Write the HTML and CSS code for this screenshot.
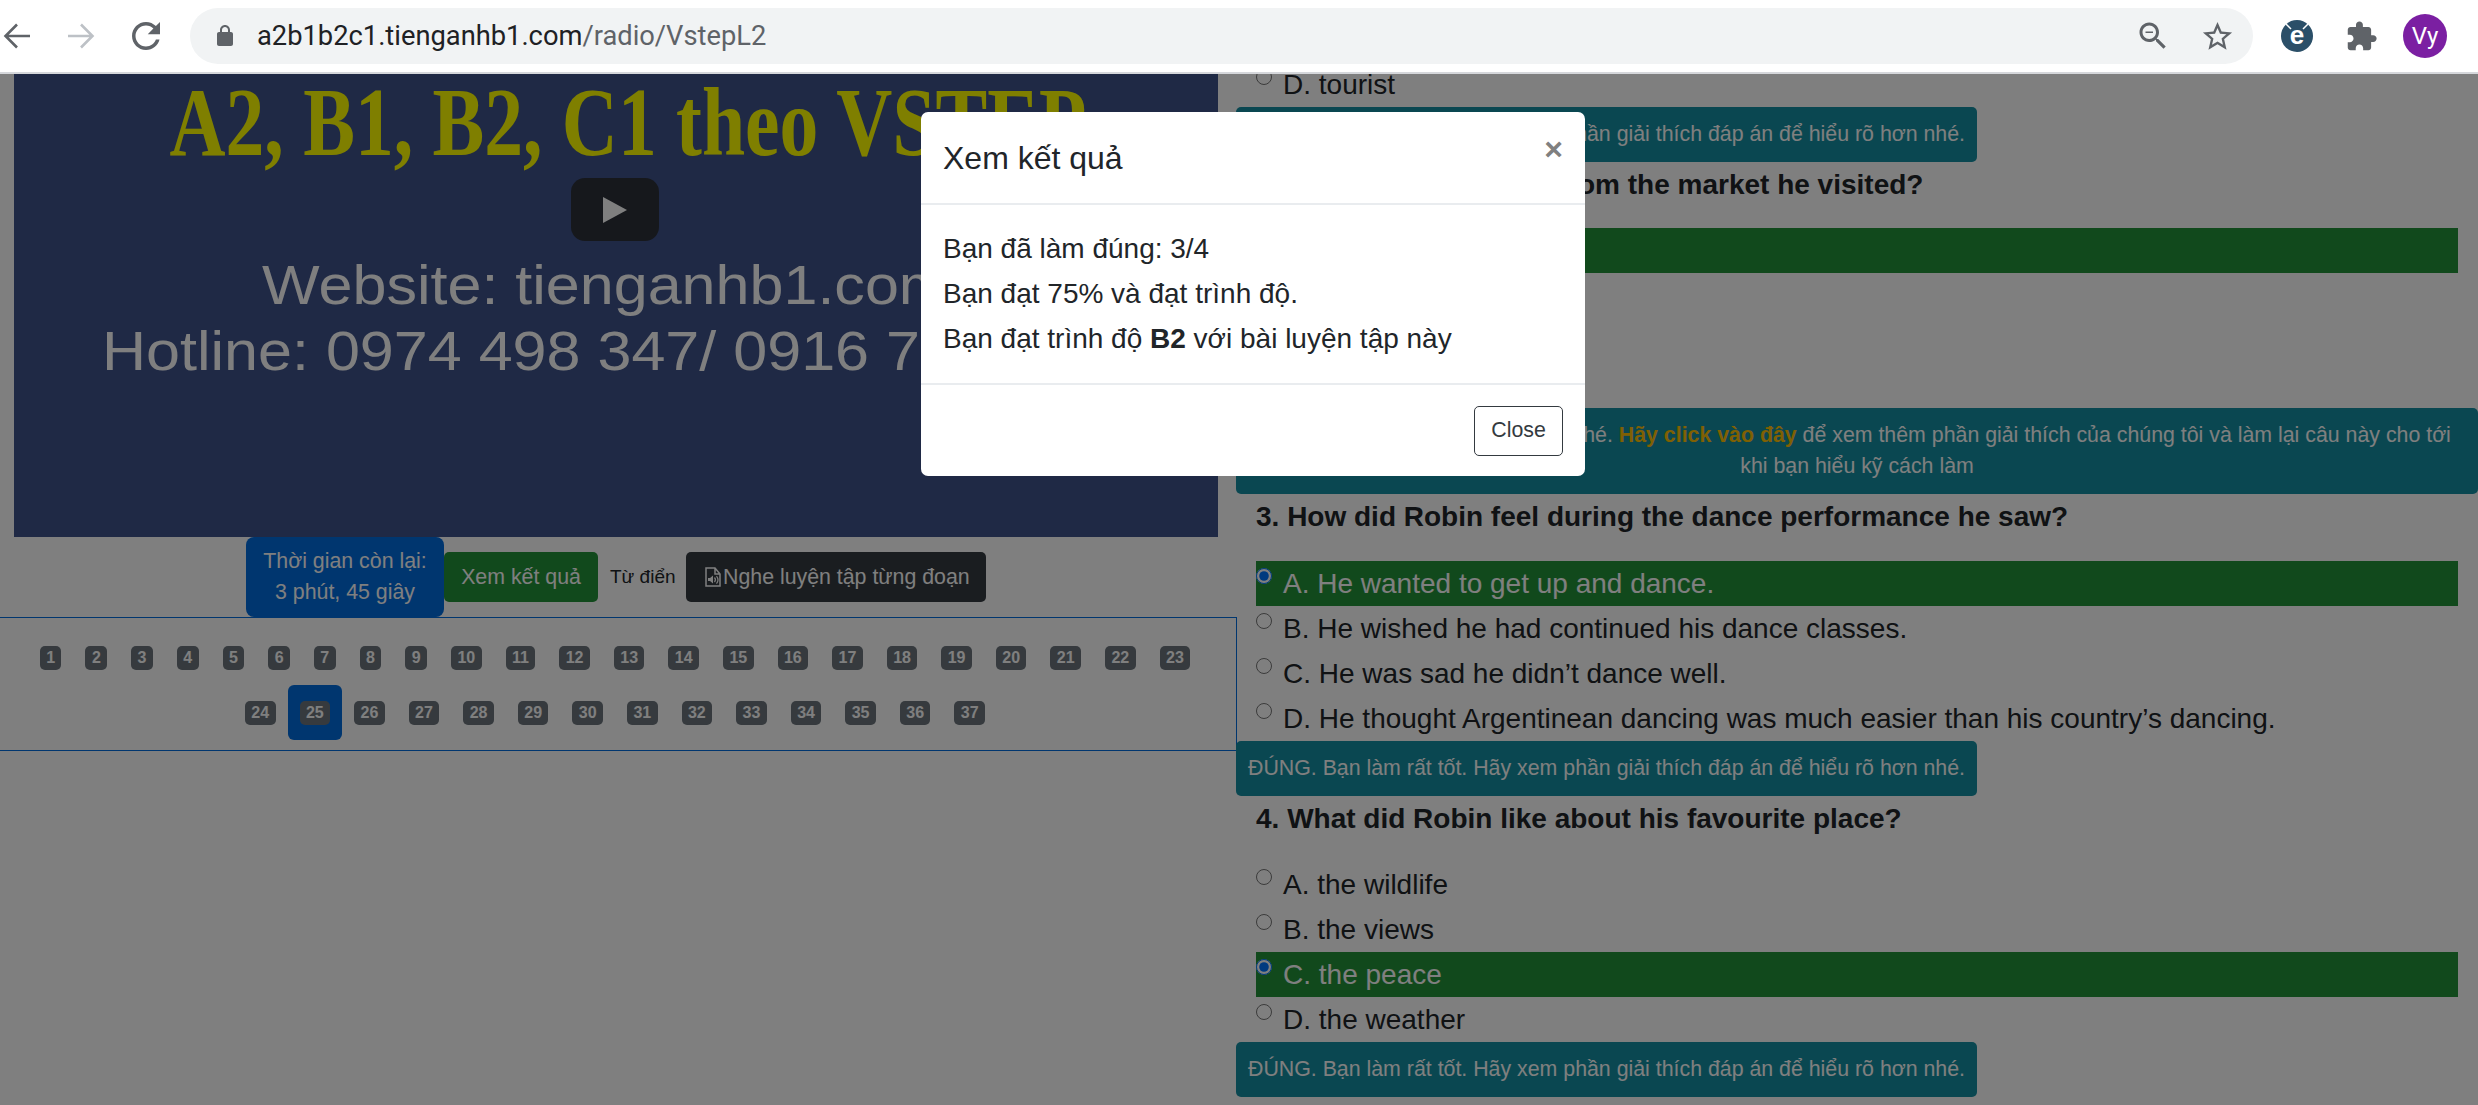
FILE: index.html
```html
<!DOCTYPE html>
<html lang="vi">
<head>
    <meta charset="UTF-8">
    <title>Luyện nghe VSTEP</title>
    <link rel="stylesheet" href="styles.css">
</head>
<body>
    <div class="toolbar">
        <svg class="tb-back" viewBox="0 0 30 30"><path d="M28 15H4M15 3.5L3.5 15 15 26.5"/></svg>
        <svg class="tb-forward" viewBox="0 0 30 30"><path d="M2 15h24M15 3.5L26.5 15 15 26.5"/></svg>
        <svg class="tb-reload" viewBox="0 0 24 24"><path d="M17.65 6.35C16.2 4.9 14.21 4 12 4c-4.42 0-7.99 3.58-7.99 8s3.57 8 7.99 8c3.73 0 6.84-2.55 7.73-6h-2.08c-.82 2.33-3.04 4-5.65 4-3.31 0-6-2.69-6-6s2.69-6 6-6c1.66 0 3.14.69 4.22 1.78L13 11h7V4l-2.35 2.35z"/></svg>
        <div class="omnibox">
            <svg class="tb-lock" viewBox="0 0 24 24"><path d="M18 8h-1V6c0-2.76-2.24-5-5-5S7 3.24 7 6v2H6c-1.1 0-2 .9-2 2v10c0 1.1.9 2 2 2h12c1.1 0 2-.9 2-2V10c0-1.1-.9-2-2-2zM9 6c0-1.66 1.34-3 3-3s3 1.34 3 3v2H9V6z"/></svg>
            <div class="url">a2b1b2c1.tienganhb1.com<span class="url-path">/radio/VstepL2</span></div>
            <svg class="tb-zoom" viewBox="0 0 24 24"><path d="M15.5 14h-.79l-.28-.27C15.41 12.59 16 11.11 16 9.5 16 5.91 13.09 3 9.5 3S3 5.91 3 9.5 5.91 16 9.5 16c1.61 0 3.09-.59 4.23-1.57l.27.28v.79l5 4.99L20.49 19l-4.99-5zm-6 0C7.01 14 5 11.99 5 9.5S7.01 5 9.5 5 14 7.01 14 9.5 11.99 14 9.5 14zM7 9h5v1H7z"/></svg>
            <svg class="tb-star" viewBox="0 0 24 24"><path d="M22 9.24l-7.19-.62L12 2 9.19 8.63 2 9.24l5.46 4.73L5.82 21 12 17.27 18.18 21l-1.63-7.03L22 9.24zM12 15.4l-3.76 2.27 1-4.28-3.32-2.88 4.38-.38L12 6.1l1.71 4.04 4.38.38-3.32 2.88 1 4.28L12 15.4z"/></svg>
        </div>
        <svg class="tb-ext" viewBox="0 0 32 32">
            <circle cx="16" cy="16" r="16" fill="#2b4f68"/>
            <path d="M5 4l5 5M27 4l-5 5" stroke="#fff" stroke-width="1.5"/>
            <text x="16" y="24" text-anchor="middle" class="ext-letter">e</text>
        </svg>
        <svg class="tb-puzzle" viewBox="0 0 24 24"><path d="M20.5 11H19V7c0-1.1-.9-2-2-2h-4V3.5C13 2.12 11.88 1 10.5 1S8 2.12 8 3.5V5H4c-1.1 0-1.99.9-1.99 2v3.8H3.5c1.49 0 2.7 1.21 2.7 2.7s-1.21 2.7-2.7 2.7H2V20c0 1.1.9 2 2 2h3.8v-1.5c0-1.49 1.21-2.7 2.7-2.7 1.49 0 2.7 1.21 2.7 2.7V22H17c1.1 0 2-.9 2-2v-4h1.5c1.38 0 2.5-1.12 2.5-2.5S21.88 11 20.5 11z"/></svg>
        <div class="avatar">Vy</div>
    </div>

    <div class="viewport">
        <div class="page">
            <div class="left-col">
                <div class="video">
                    <div class="video-title">A2, B1, B2, C1 theo VSTEP</div>
                    <div class="video-line video-site">Website: tienganhb1.com</div>
                    <div class="video-line video-hotline">Hotline: 0974 498 347/ 0916 7</div>
                    <div class="play-button"><span class="play-arrow"></span></div>
                </div>
                <div class="actions">
                    <div class="timer">Thời gian còn lại:<br>3 phút, 45 giây</div>
                    <a class="btn btn-green">Xem kết quả</a>
                    <span class="dict">Từ điển</span>
                    <a class="btn btn-dark">
                        <svg class="file-icon" viewBox="0 0 20 20">
                            <path d="M3 1h9l5 6v12H3zM12 1v6h5" fill="none" stroke="currentColor" stroke-width="1.5"/>
                            <path d="M5 11h2l3-2.5v8L7 14H5z" fill="currentColor"/>
                            <path d="M11.5 10.5a3.5 3.5 0 0 1 0 4.5M13.5 9a6 6 0 0 1 0 7.5" fill="none" stroke="currentColor" stroke-width="1.2"/>
                        </svg>Nghe luyện tập từng đoạn
                    </a>
                </div>
                <div class="qnav">
                    <a class="qnav-item"><span class="badge">1</span></a>
                    <a class="qnav-item"><span class="badge">2</span></a>
                    <a class="qnav-item"><span class="badge">3</span></a>
                    <a class="qnav-item"><span class="badge">4</span></a>
                    <a class="qnav-item"><span class="badge">5</span></a>
                    <a class="qnav-item"><span class="badge">6</span></a>
                    <a class="qnav-item"><span class="badge">7</span></a>
                    <a class="qnav-item"><span class="badge">8</span></a>
                    <a class="qnav-item"><span class="badge">9</span></a>
                    <a class="qnav-item"><span class="badge">10</span></a>
                    <a class="qnav-item"><span class="badge">11</span></a>
                    <a class="qnav-item"><span class="badge">12</span></a>
                    <a class="qnav-item"><span class="badge">13</span></a>
                    <a class="qnav-item"><span class="badge">14</span></a>
                    <a class="qnav-item"><span class="badge">15</span></a>
                    <a class="qnav-item"><span class="badge">16</span></a>
                    <a class="qnav-item"><span class="badge">17</span></a>
                    <a class="qnav-item"><span class="badge">18</span></a>
                    <a class="qnav-item"><span class="badge">19</span></a>
                    <a class="qnav-item"><span class="badge">20</span></a>
                    <a class="qnav-item"><span class="badge">21</span></a>
                    <a class="qnav-item"><span class="badge">22</span></a>
                    <a class="qnav-item"><span class="badge">23</span></a>
                    <a class="qnav-item"><span class="badge">24</span></a>
                    <a class="qnav-item active"><span class="badge">25</span></a>
                    <a class="qnav-item"><span class="badge">26</span></a>
                    <a class="qnav-item"><span class="badge">27</span></a>
                    <a class="qnav-item"><span class="badge">28</span></a>
                    <a class="qnav-item"><span class="badge">29</span></a>
                    <a class="qnav-item"><span class="badge">30</span></a>
                    <a class="qnav-item"><span class="badge">31</span></a>
                    <a class="qnav-item"><span class="badge">32</span></a>
                    <a class="qnav-item"><span class="badge">33</span></a>
                    <a class="qnav-item"><span class="badge">34</span></a>
                    <a class="qnav-item"><span class="badge">35</span></a>
                    <a class="qnav-item"><span class="badge">36</span></a>
                    <a class="qnav-item"><span class="badge">37</span></a>
                </div>
            </div>

            <div class="right-col">
                <label class="option"><input type="radio" name="q1"><span>D. tourist</span></label>
                <div class="alert">ĐÚNG. Bạn làm rất tốt. Hãy xem phần giải thích đáp án để hiểu rõ hơn nhé.</div>

                <div class="question">2. What did Robin buy from the market he visited?</div>
                <label class="option correct"><input type="radio" name="q2" checked><span>A.</span></label>
                <label class="option"><input type="radio" name="q2"><span>B.</span></label>
                <label class="option"><input type="radio" name="q2"><span>C.</span></label>
                <label class="option"><input type="radio" name="q2"><span>D.</span></label>
                <div class="alert alert-wide">SAI. Bạn hãy xem lại kỹ đáp án, nhé. <a class="alert-link">Hãy click vào đây</a> để xem thêm phần giải thích của chúng tôi và làm lại câu này cho tới<br>khi bạn hiểu kỹ cách làm</div>

                <div class="question">3. How did Robin feel during the dance performance he saw?</div>
                <label class="option correct"><input type="radio" name="q3" checked><span>A. He wanted to get up and dance.</span></label>
                <label class="option"><input type="radio" name="q3"><span>B. He wished he had continued his dance classes.</span></label>
                <label class="option"><input type="radio" name="q3"><span>C. He was sad he didn’t dance well.</span></label>
                <label class="option"><input type="radio" name="q3"><span>D. He thought Argentinean dancing was much easier than his country’s dancing.</span></label>
                <div class="alert">ĐÚNG. Bạn làm rất tốt. Hãy xem phần giải thích đáp án để hiểu rõ hơn nhé.</div>

                <div class="question">4. What did Robin like about his favourite place?</div>
                <label class="option"><input type="radio" name="q4"><span>A. the wildlife</span></label>
                <label class="option"><input type="radio" name="q4"><span>B. the views</span></label>
                <label class="option correct"><input type="radio" name="q4" checked><span>C. the peace</span></label>
                <label class="option"><input type="radio" name="q4"><span>D. the weather</span></label>
                <div class="alert">ĐÚNG. Bạn làm rất tốt. Hãy xem phần giải thích đáp án để hiểu rõ hơn nhé.</div>
            </div>
        </div>

        <div class="backdrop">
            <div class="modal">
                <div class="modal-header">
                    <div class="modal-title">Xem kết quả</div>
                    <span class="modal-x">×</span>
                </div>
                <div class="modal-body">
                    <div>Bạn đã làm đúng: 3/4</div>
                    <div>Bạn đạt 75% và đạt trình độ.</div>
                    <div>Bạn đạt trình độ <b>B2</b> với bài luyện tập này</div>
                </div>
                <div class="modal-footer">
                    <a class="btn-close">Close</a>
                </div>
            </div>
        </div>
    </div>
</body>
</html>
```

FILE: styles.css
```css
* {
    margin: 0;
    padding: 0;
    box-sizing: border-box;
}

body {
    font-family: 'Liberation Sans', Arial, sans-serif;
    background: #fff;
    color: #212529;
    height: 100vh;
    overflow: hidden;
    display: flex;
    flex-direction: column;
}

/* browser bar */
.toolbar {
    flex: none;
    height: 74px;
    display: flex;
    align-items: center;
    background: #fff;
    border-bottom: 2px solid #d5d7db;
}

.toolbar svg {
    flex: none;
    fill: #5f6368;
}

.tb-back, .tb-forward {
    width: 30px;
    height: 30px;
    fill: none !important;
    stroke: #5f6368;
    stroke-width: 2.6;
}

.tb-back {
    margin-left: 2px;
}

.tb-forward {
    margin-left: 34px;
    stroke: #bdc1c6;
}

.tb-reload {
    width: 42px;
    height: 42px;
    margin-left: 29px;
}

.omnibox {
    flex: none;
    width: 2063px;
    height: 56px;
    margin-left: 23px;
    padding: 0 18px 0 23px;
    border-radius: 28px;
    background: #f1f3f4;
    display: flex;
    align-items: center;
}

.tb-lock {
    width: 24px;
    height: 24px;
}

.url {
    flex: 1;
    margin-left: 20px;
    font-family: 'Roboto', sans-serif;
    font-size: 27.3px;
    color: #202124;
}

.url-path {
    color: #5f6368;
}

.tb-zoom {
    width: 36px;
    height: 36px;
}

.tb-star {
    width: 35px;
    height: 35px;
    margin-left: 29px;
}

.tb-ext {
    width: 32px;
    height: 32px;
    margin-left: 28px;
}

.ext-letter {
    font-family: 'Liberation Sans', sans-serif;
    font-weight: bold;
    font-size: 26px;
    fill: #fff;
}

.tb-puzzle {
    width: 33px;
    height: 33px;
    margin-left: 32px;
}

.avatar {
    flex: none;
    width: 44px;
    height: 44px;
    margin-left: 25px;
    border-radius: 50%;
    background: #7b1fa2;
    color: #fff;
    font-family: 'Roboto', sans-serif;
    font-size: 24px;
    line-height: 44px;
    text-align: center;
}

/* page under the dialog */
.viewport {
    flex: 1;
    position: relative;
    overflow: hidden;
}

.page {
    display: grid;
    grid-template-columns: 1236px 1fr;
    align-items: start;
}

.left-col {
    min-width: 0;
}

.video {
    position: relative;
    height: 463px;
    margin: 0 18px 0 14px;
    background: #3e528a;
    overflow: hidden;
}

/* the thumbnail's texts are stretched sideways in the video frame */
.video-title {
    font-family: 'Liberation Serif', serif;
    font-weight: bold;
    font-size: 97px;
    line-height: 98px;
    color: #ffff00;
    text-align: center;
    white-space: nowrap;
    transform: translateX(12px) scaleX(0.8);
}

.video-line {
    font-size: 56px;
    line-height: 62px;
    color: #fff;
    white-space: nowrap;
}

.video-site {
    margin-top: 82px;
    transform: translateX(248px) scaleX(1.09);
    transform-origin: left;
}

.video-hotline {
    margin-top: 4px;
    transform: translateX(88px) scaleX(1.09);
    transform-origin: left;
}

.play-button {
    position: absolute;
    left: 557px;
    top: 104px;
    width: 88px;
    height: 63px;
    border-radius: 14px;
    background: #2c3038;
    display: flex;
    align-items: center;
    justify-content: center;
}

.play-arrow {
    width: 0;
    height: 0;
    border-left: 24px solid #fff;
    border-top: 13px solid transparent;
    border-bottom: 13px solid transparent;
}

.actions {
    height: 80px;
    margin-right: 4px;
    display: flex;
    align-items: center;
    justify-content: center;
    font-size: 21.33px;
}

.timer {
    width: 198px;
    height: 80px;
    padding-top: 9px;
    border-radius: 8px;
    background: #006cdf;
    color: #fff;
    line-height: 31px;
    text-align: center;
}

.btn {
    height: 50px;
    border-radius: 5px;
    color: #fff;
    display: flex;
    align-items: center;
}

.btn-green {
    width: 154px;
    justify-content: center;
    background: #239339;
}

.dict {
    width: 64px;
    margin: 0 12px;
    font-size: 19px;
    color: #212529;
    white-space: nowrap;
}

.btn-dark {
    width: 300px;
    padding-left: 17px;
    background: #343a40;
}

.file-icon {
    width: 20px;
    height: 20px;
}

.qnav {
    margin-right: -1px;
    padding: 12px 21px 10px 15px;
    border-top: 1px solid #006cdf;
    border-right: 1px solid #006cdf;
    border-bottom: 1px solid #006cdf;
    display: flex;
    flex-wrap: wrap;
    justify-content: center;
}

.qnav-item {
    height: 55px;
    padding: 0 12px;
    border-radius: 6px;
    display: flex;
    align-items: center;
}

.qnav-item.active {
    background: #006cdf;
}

.badge {
    height: 24px;
    padding: 0 6.4px;
    border-radius: 5px;
    background: #6c757d;
    color: #fff;
    font-size: 16px;
    font-weight: bold;
    line-height: 24px;
}

.right-col {
    margin-top: -12px;
}

.option {
    height: 45px;
    margin: 0 20px;
    display: flex;
    font-size: 28px;
    line-height: 45px;
    color: #212529;
}

.option input {
    flex: none;
    width: 16px;
    height: 16px;
    margin: 7px 11px 0 0;
}

.option.correct {
    background: #239339;
    color: #fff;
}

.alert {
    width: fit-content;
    padding: 12px;
    border-radius: 5px;
    background: #148fa2;
    color: #fff;
    font-size: 21.33px;
    line-height: 31px;
    text-align: center;
}

.alert-wide {
    width: auto;
}

.alert-link {
    color: #ffc107;
    font-weight: bold;
}

.question {
    height: 66.4px;
    margin-left: 20px;
    font-size: 28px;
    font-weight: bold;
    line-height: 46px;
    color: #212529;
}

/* dialog */
.backdrop {
    position: absolute;
    inset: 0;
    padding: 38px 0 0 28px;
    background: rgba(0, 0, 0, 0.5);
    display: flex;
    justify-content: center;
    align-items: flex-start;
}

.modal {
    width: 664px;
    height: 364px;
    border-radius: 7px;
    background: #fff;
    display: flex;
    flex-direction: column;
}

.modal-header {
    height: 93px;
    padding: 0 22px;
    border-bottom: 2px solid #e9ecef;
    display: flex;
    justify-content: space-between;
}

.modal-title {
    font-size: 32px;
    line-height: 92px;
}

.modal-x {
    font-size: 32px;
    font-weight: bold;
    line-height: 74px;
    color: #808080;
}

.modal-body {
    height: 178px;
    padding: 21px 22px 0;
    font-size: 28px;
    line-height: 45px;
}

.modal-footer {
    flex: 1;
    padding: 21px 22px 0;
    border-top: 2px solid #e9ecef;
    display: flex;
    justify-content: flex-end;
}

.btn-close {
    width: 89px;
    height: 50px;
    border: 1px solid #343a40;
    border-radius: 5px;
    font-size: 21.33px;
    line-height: 46px;
    text-align: center;
    color: #343a40;
}
```
